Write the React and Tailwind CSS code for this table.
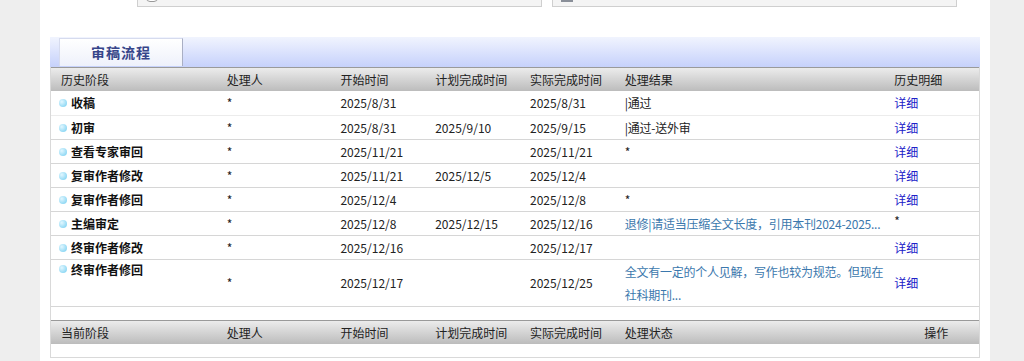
import React from 'react';

const history = [
  { stage: '收稿', who: '*', start: '2025/8/31', plan: '', done: '2025/8/31', result: ['|通过'], detail: 'link' },
  { stage: '初审', who: '*', start: '2025/8/31', plan: '2025/9/10', done: '2025/9/15', result: ['|通过-送外审'], detail: 'link' },
  { stage: '查看专家审回', who: '*', start: '2025/11/21', plan: '', done: '2025/11/21', result: ['*'], detail: 'link' },
  { stage: '复审作者修改', who: '*', start: '2025/11/21', plan: '2025/12/5', done: '2025/12/4', result: [], detail: 'link' },
  { stage: '复审作者修回', who: '*', start: '2025/12/4', plan: '', done: '2025/12/8', result: ['*'], detail: 'link' },
  { stage: '主编审定', who: '*', start: '2025/12/8', plan: '2025/12/15', done: '2025/12/16', result: ['退修|请适当压缩全文长度，引用本刊2024-2025...'], resultLink: true, detail: '*' },
  { stage: '终审作者修改', who: '*', start: '2025/12/16', plan: '', done: '2025/12/17', result: [], detail: 'link' },
  { stage: '终审作者修回', who: '*', start: '2025/12/17', plan: '', done: '2025/12/25', result: ['全文有一定的个人见解，写作也较为规范。但现在', '社科期刊...'], resultLink: true, detail: 'link', tall: true },
];

const font = 'font-["Noto_Sans_CJK_SC","Noto_Sans",sans-serif]';

const Bullet = () => (
  <span className="inline-block w-[8px] h-[8px] rounded-full bg-[radial-gradient(circle_at_35%_35%,#e2f7ff,#72cdf0)] shrink-0" />
);

const HeadRow = ({ cols, last }) => (
  <div className="flex h-[24px] items-center border-t border-[#9a9a9a] bg-gradient-to-b from-[#ececec] to-[#bcbcbc] text-[12px] text-[#222]">
    <div className="w-[176px] pl-[10px]">{cols[0]}</div>
    <div className="w-[114px]">{cols[1]}</div>
    <div className="w-[95px]">{cols[2]}</div>
    <div className="w-[95px]">{cols[3]}</div>
    <div className="w-[95px]">{cols[4]}</div>
    {last ? (
      <>
        <div className="w-[300px]">{cols[5]}</div>
        <div className="w-[55px]">{cols[6]}</div>
      </>
    ) : (
      <>
        <div className="w-[270px]">{cols[5]}</div>
        <div className="w-[85px]">{cols[6]}</div>
      </>
    )}
  </div>
);

export default function App() {
  return (
    <div className={`w-[1024px] h-[361px] overflow-hidden bg-[#eeeeee] ${font}`}>
      <div className="ml-[40px] w-[950px] h-full bg-white flex flex-col">
        {/* top search boxes, mostly scrolled out of view */}
        <div className="flex gap-[10px] pl-[97px] -mt-[24px]">
          <div className="w-[405px] h-[31px] border border-[#cfcfcf] bg-[#f4f4f4] flex items-end pb-[4px] pl-[8px]">
            <span className="w-[12px] h-[10px] border border-[#999] rounded-sm bg-white" />
          </div>
          <div className="w-[405px] h-[31px] border border-[#cfcfcf] bg-[#f4f4f4] flex items-end pb-[4px] pl-[8px]">
            <span className="w-[12px] h-[8px] bg-[#8a8f99]" />
          </div>
        </div>

        <div className="mx-[10px] mt-[30px] w-[930px]">
          {/* tab bar */}
          <div className="h-[30px] bg-gradient-to-b from-[#f1f4fe] to-[#c6d1fb] flex items-end pl-[9px]">
            <div className="w-[124px] h-[28px] mb-[1px] bg-gradient-to-b from-white to-[#eef1fb] border border-[#d6dbee] border-r-[#a9afc4] border-b-0 flex items-center justify-center">
              <span className="text-[14px] font-bold text-[#36458a] tracking-[1px]">审稿流程</span>
            </div>
          </div>

          <div className="border-x border-[#d9d9d9]">
            <HeadRow cols={['历史阶段', '处理人', '开始时间', '计划完成时间', '实际完成时间', '处理结果', '历史明细']} />

            {history.map((r, i) => (
              <div
                key={i}
                className={`flex text-[12px] text-[#222] border-b ${i === 0 ? 'border-[#ececec]' : 'border-[#d6d6d6]'} ${r.tall ? 'h-[47px]' : i === 0 ? 'h-[25px]' : 'h-[24px]'}`}
              >
                <div className={`w-[176px] pl-[8px] flex gap-[4px] ${r.tall ? 'items-start pt-[5px]' : 'items-center'}`}>
                  <Bullet />
                  <span className={`font-bold text-[#111] ${r.tall ? '-mt-[4px]' : ''}`}>{r.stage}</span>
                </div>
                <div className="w-[114px] flex items-center">{r.who}</div>
                <div className="w-[95px] flex items-center">{r.start}</div>
                <div className="w-[95px] flex items-center">{r.plan}</div>
                <div className="w-[95px] flex items-center">{r.done}</div>
                <div className={`w-[270px] flex flex-col justify-center whitespace-nowrap tracking-[-0.25px] ${r.resultLink ? 'text-[#3b78ad]' : ''}`}>
                  {r.result.map((line, j) => (
                    <span key={j} className={r.tall ? 'leading-[23px]' : ''}>{line}</span>
                  ))}
                </div>
                <div className="w-[85px] flex items-center">
                  {r.detail === 'link' ? (
                    <span className="text-[#2020c8]">详细</span>
                  ) : (
                    <span className="-mt-[6px]">{r.detail}</span>
                  )}
                </div>
              </div>
            ))}

            <div className="h-[13px]" />

            <HeadRow last cols={['当前阶段', '处理人', '开始时间', '计划完成时间', '实际完成时间', '处理状态', '操作']} />
            <div className="h-[14px] border-b border-[#d9d9d9]" />
          </div>
        </div>
      </div>
    </div>
  );
}
